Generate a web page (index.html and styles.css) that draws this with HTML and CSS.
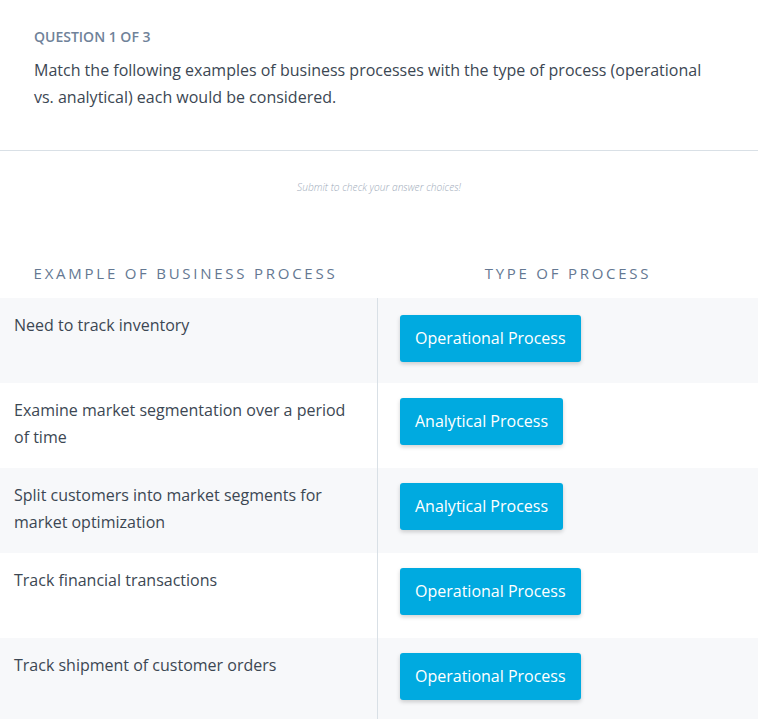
FILE: index.html
```html
<!DOCTYPE html>
<html lang="en">
<head>
<meta charset="utf-8">
<title>Question 1 of 3</title>
<link rel="stylesheet" href="styles.css">
</head>
<body>
<section class="question">
  <div class="q-label">QUESTION 1 OF 3</div>
  <p class="q-text">Match the following examples of business processes with the type of process (operational vs. analytical) each would be considered.</p>
</section>
<section class="answers">
  <p class="hint">Submit to check your answer choices!</p>
  <div class="col-heads">
    <div class="col-head">Example of Business Process</div>
    <div class="col-head">Type of Process</div>
  </div>
  <div class="table">
    <div class="row shade">
      <div class="cell-left">Need to track inventory</div>
      <div class="cell-right"><span class="chip">Operational Process</span></div>
    </div>
    <div class="row">
      <div class="cell-left">Examine market segmentation over a period of time</div>
      <div class="cell-right"><span class="chip">Analytical Process</span></div>
    </div>
    <div class="row shade">
      <div class="cell-left">Split customers into market segments for market optimization</div>
      <div class="cell-right"><span class="chip">Analytical Process</span></div>
    </div>
    <div class="row">
      <div class="cell-left">Track financial transactions</div>
      <div class="cell-right"><span class="chip">Operational Process</span></div>
    </div>
    <div class="row shade">
      <div class="cell-left">Track shipment of customer orders</div>
      <div class="cell-right"><span class="chip">Operational Process</span></div>
    </div>
  </div>
</section>
</body>
</html>
```
FILE: styles.css
```css
html, body {
  margin: 0;
  padding: 0;
  background: #ffffff;
}
body {
  font-family: "Open Sans", "Noto Sans", sans-serif;
  color: #3c4753;
}
.question {
  padding: 27px 34px 39px;
  border-bottom: 1px solid #d9e0e6;
}
.q-label {
  font-size: 14px;
  line-height: 20px;
  font-weight: 600;
  color: #6f8299;
}
.q-text {
  margin: 10px 0 0;
  font-size: 16px;
  line-height: 27px;
  color: #3c4753;
  max-width: 680px;
}
.answers {
  padding-top: 29px;
}
.hint {
  margin: 0;
  text-align: center;
  font-size: 10.2px;
  line-height: 14px;
  font-style: italic;
  font-weight: 300;
  color: #9eabba;
}
.col-heads {
  display: grid;
  grid-template-columns: 378px 1fr;
  margin-top: 69px;
  margin-bottom: 15px;
}
.col-head {
  text-align: center;
  font-size: 15px;
  line-height: 20px;
  letter-spacing: 2.75px;
  text-transform: uppercase;
  color: #647892;
}
.col-head:first-child {
  padding-right: 7px;
}
.table {
  display: flex;
  flex-direction: column;
}
.row {
  display: grid;
  grid-template-columns: 378px 1fr;
  height: 85px;
  background: #ffffff;
}
.row.shade {
  background: #f7f8fa;
}
.cell-left {
  border-right: 1px solid #d9e0e6;
  padding: 14px 28px 0 14px;
  font-size: 16px;
  line-height: 27px;
  color: #3c4753;
}
.cell-right {
  padding: 15px 0 0 22px;
}
.row:first-child .cell-right {
  padding-top: 17px;
}
.chip {
  display: inline-block;
  background: #00aae0;
  color: #ffffff;
  font-size: 16px;
  line-height: 27px;
  padding: 10px 15px;
  border-radius: 3px;
  box-shadow: 0 2px 4px rgba(0, 0, 0, 0.18);
}
```
